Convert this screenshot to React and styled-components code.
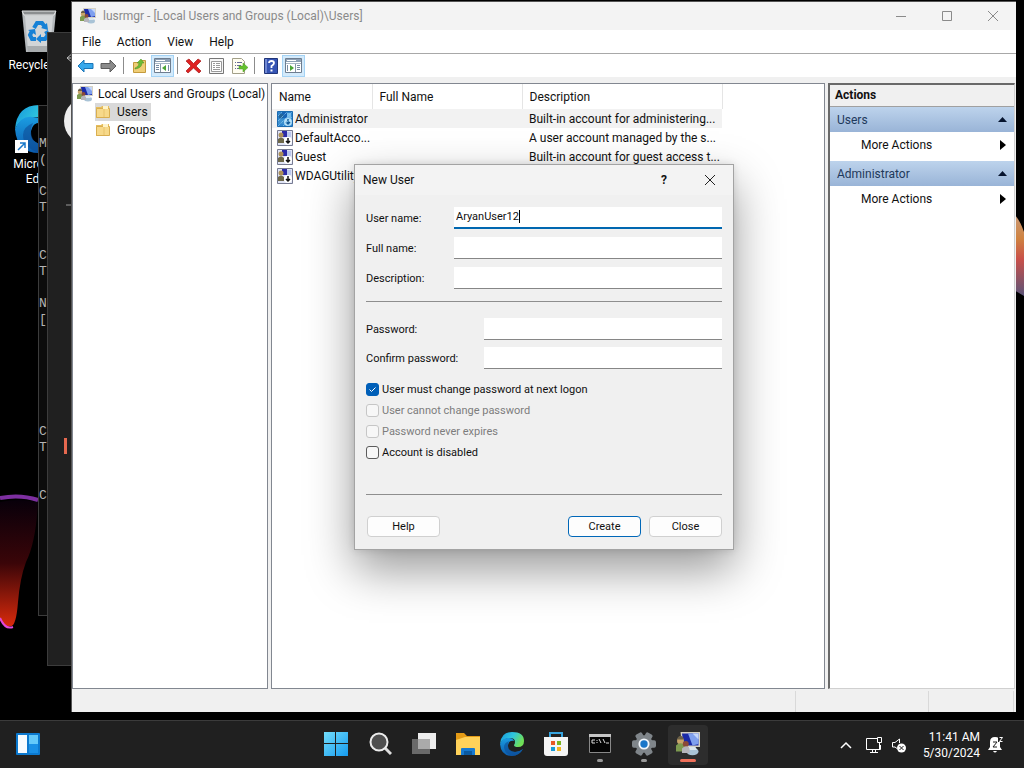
import React, { useState } from 'react';
import styled, { createGlobalStyle, css } from 'styled-components';

const GlobalStyle = createGlobalStyle`
  * {
    box-sizing: border-box;
  }
  body {
    margin: 0;
    background: #000;
    color: #111;
    font-family: Roboto, 'Noto Sans', sans-serif;
    font-size: 12px;
  }
  button,
  input {
    font: inherit;
    color: inherit;
  }
  svg {
    display: block;
    flex: none;
  }
`;

/* ---------- desktop ---------- */

const Desktop = styled.div`
  display: flex;
  flex-direction: column;
  height: 100vh;
  min-height: 600px;
  overflow: hidden;
`;

const Workspace = styled.main`
  position: relative;
  flex: 1;
  overflow: hidden;
`;

const Petal = styled.svg`
  position: absolute;
  top: ${(p) => p.$top}px;
  ${(p) => (p.$right ? 'right: 0;' : 'left: 0;')}
`;

const Shortcuts = styled.div`
  display: flex;
  flex-direction: column;
  gap: 32px;
  width: 78px;
  padding-top: 8px;
`;

const Shortcut = styled.a`
  display: flex;
  flex-direction: column;
  align-items: center;
  gap: 4px;
  color: #fff;
  line-height: 15px;
  text-align: center;
  text-decoration: none;
`;

const BackWindow = styled.div`
  position: absolute;
  top: ${(p) => p.$top}px;
  left: ${(p) => p.$left}px;
  width: 300px;
  height: ${(p) => p.$height}px;
  border: 1px solid #3c3c3c;
  background: ${(p) => p.$bg};
`;

const ConsoleText = styled.pre`
  margin: 30px 0 0;
  color: #b4b4b4;
  font-family: 'Liberation Mono', monospace;
  font-size: 13px;
  line-height: 16px;
`;

/* ---------- management console ---------- */

const ConsoleWindow = styled.section`
  position: absolute;
  top: 1px;
  right: 8px;
  bottom: 8px;
  left: 71px;
  display: flex;
  flex-direction: column;
  border: 1px solid #555;
  border-width: 1px 0 0 1px;
  background: #f0f0f0;
`;

const TitleBar = styled.header`
  display: flex;
  align-items: center;
  height: 28px;
  padding-left: 8px;
  background: #f3f3f3;
  color: #8a8a8a;
`;

const Title = styled.h1`
  flex: 1;
  margin: 0;
  font-size: 12px;
  font-weight: 400;

  svg + & {
    margin-left: 7px;
  }
`;

const CaptionButton = styled.button`
  display: flex;
  align-items: center;
  justify-content: center;
  width: 46px;
  height: 28px;
  padding: 0;
  border: 0;
  background: none;
  color: ${(p) => p.$color || '#8a8a8a'};
`;

const MenuBar = styled.nav`
  display: flex;
  height: 24px;
  padding-left: 2px;
  border-bottom: 1px solid #a8a8a8;
  background: #fff;
`;

const MenuItem = styled.button`
  padding: 0 8px;
  border: 0;
  background: none;
`;

const Toolbar = styled.div`
  display: flex;
  align-items: center;
  height: 23px;
  padding-left: 2px;
  background: #fff;
`;

const ToolButton = styled.button`
  display: flex;
  align-items: center;
  justify-content: center;
  width: 23px;
  height: 22px;
  padding: 0;
  border: 1px solid ${(p) => (p.$active ? '#a4d3f5' : 'transparent')};
  background: ${(p) => (p.$active ? '#d3eafb' : 'none')};
`;

const ToolSeparator = styled.span`
  width: 1px;
  height: 17px;
  margin: 0 4px 0 3px;
  background: #8c8c8c;
`;

const Panes = styled.div`
  display: flex;
  flex: 1;
  gap: 3px;
  min-height: 0;
  padding-top: 6px;
`;

const Pane = styled.div`
  border: 1px solid #828790;
  background: #fff;
`;

const TreePane = styled(Pane)`
  width: 196px;
  padding-top: 1px;
`;

const TreeRow = styled.div`
  display: flex;
  align-items: center;
  gap: 5px;
  height: 18px;
  padding-left: ${(p) => (p.$nested ? 22 : 4)}px;
  white-space: nowrap;
`;

const TreeLabel = styled.button`
  display: flex;
  align-items: center;
  gap: 6px;
  height: 18px;
  padding: 0 3px 0 0;
  border: 0;
  background: ${(p) => (p.$selected ? '#d9d9d9' : 'none')};
`;

const ListPane = styled(Pane)`
  flex: 1;
  min-width: 0;
`;

const UserTable = styled.table`
  width: 450px;
  table-layout: fixed;
  border-collapse: collapse;
  text-align: left;
  white-space: nowrap;

  th {
    height: 25px;
    padding: 0 7px;
    border-right: 1px solid #e5e5e5;
    font-weight: 400;
  }
  td {
    height: 19px;
    padding: 0 0 0 7px;
    line-height: 18px;
  }
`;

const Row = styled.tr`
  background: ${(p) => (p.$selected ? '#f2f2f2' : '#fff')};

  td:first-child {
    padding-left: 5px;
  }
`;

const NameCell = styled.span`
  display: flex;
  align-items: center;
  gap: 2px;
`;

const ActionsPane = styled.aside`
  width: 187px;
  margin-right: 1px;
  border: 1px solid #d0d0d0;
  border-top: 2px solid #696969;
  border-left: 2px solid #696969;
  background: #fff;
`;

const ActionsTitle = styled.h2`
  height: 22px;
  margin: 0;
  padding-left: 5px;
  border-bottom: 1px solid #a0a0a0;
  background: #f0f0f0;
  font-size: 12px;
  font-weight: 700;
  line-height: 21px;
`;

const ActionGroup = styled.div`
  margin-bottom: 4px;
`;

const GroupButton = styled.button`
  display: flex;
  align-items: center;
  justify-content: space-between;
  width: 100%;
  height: 25px;
  padding: 0 7px;
  border: 0;
  background: linear-gradient(#bdd3ec, #99b4d7);
  color: #1e395b;
`;

const ActionButton = styled(GroupButton)`
  padding: 0 8px 0 31px;
  background: none;
  color: #111;
`;

const StatusBar = styled.footer`
  display: flex;
  justify-content: flex-end;
  height: 23px;
  padding: 2px 2px 0 0;
`;

const StatusCell = styled.span`
  width: ${(p) => p.$width}px;
  border-left: 1px solid #d9d9d9;
`;

/* ---------- new user dialog ---------- */

const Dialog = styled.form`
  position: absolute;
  top: 164px;
  left: 354px;
  width: 380px;
  border: 1px solid #a3a3a3;
  background: #f0f0f0;
  box-shadow: 0 20px 44px rgba(0, 0, 0, 0.4), 0 0 8px rgba(0, 0, 0, 0.12);
  font-size: 11px;
`;

const DialogTitle = styled.header`
  display: flex;
  align-items: center;
  height: 30px;
  padding-left: 8px;
  background: #f3f3f3;
  font-size: 12px;
`;

const DialogBody = styled.div`
  display: flex;
  flex-direction: column;
  padding: 12px 11px;
`;

const Fields = styled.div`
  display: flex;
  flex-direction: column;
  gap: ${(p) => p.$gap}px;
`;

const FieldRow = styled.div`
  display: grid;
  grid-template-columns: ${(p) => p.$labelWidth}px 1fr;
  align-items: center;
`;

const InputBox = styled.span`
  display: flex;
  align-items: center;
  height: 22px;
  padding: 0 2px;
  border-bottom: 1px solid #868686;
  background: #fff;

  ${(p) =>
    p.$focused &&
    css`
      padding-bottom: 2px;
      border-bottom: 2px solid #0067b0;
    `}
`;

const TextInput = styled.input`
  min-width: 0;
  padding: 0;
  border: 0;
  outline: 0;
  background: none;
  ${(p) => (p.$hug ? 'field-sizing: content; caret-color: transparent;' : 'flex: 1;')}
`;

const Caret = styled.span`
  width: 1px;
  height: 13px;
  background: #000;
`;

const Divider = styled.hr`
  width: 100%;
  height: 1px;
  margin: ${(p) => p.$margin};
  border: 0;
  background: #8e8e8e;
`;

const CheckList = styled.div`
  padding-top: 10px;
`;

const CheckLabel = styled.label`
  display: flex;
  align-items: center;
  gap: 3px;
  height: 21px;
  color: ${(p) => (p.$disabled ? '#7d7d7d' : '#111')};
`;

const CheckBox = styled.input`
  appearance: none;
  width: 13px;
  height: 13px;
  margin: 0;
  border: 1px solid #5c5c5c;
  border-radius: 3px;
  background: #f7f7f7;

  &:disabled {
    border-color: #c6c6c6;
  }
  &:checked {
    border-color: #005fb8;
    background: #005fb8
      url("data:image/svg+xml,%3Csvg xmlns='http://www.w3.org/2000/svg' viewBox='0 0 11 11'%3E%3Cpath d='M2.5 5.5l2 2 4-4' fill='none' stroke='%23fff'/%3E%3C/svg%3E");
  }
`;

const ButtonRow = styled.div`
  display: flex;
  gap: 8px;
  padding-left: 1px;
`;

const PushButton = styled.button`
  width: 73px;
  height: 21px;
  padding: 0;
  border: 1px solid ${(p) => (p.$primary ? '#0067b8' : '#d0d0d0')};
  border-radius: 4px;
  background: #fdfdfd;

  &:first-child {
    margin-right: auto;
  }
`;

/* ---------- taskbar ---------- */

const Taskbar = styled.footer`
  display: grid;
  grid-template-columns: 1fr auto 1fr;
  height: 48px;
  border-top: 1px solid #3b3b3b;
  background: #202020;
  color: #fff;
`;

const TaskGroup = styled.div`
  display: flex;
  align-items: center;
  padding-left: ${(p) => p.$inset || 0}px;
`;

const TaskButton = styled.button`
  display: flex;
  flex-direction: column;
  align-items: center;
  gap: 3px;
  width: 40px;
  height: 40px;
  margin: 0 2px;
  padding: 7px 0 0;
  border: 0;
  border-radius: 4px;
  background: ${(p) => (p.$active ? '#2d2d2d' : 'none')};

  &::after {
    content: '';
    width: ${(p) => (p.$active ? 16 : 6)}px;
    height: 3px;
    border-radius: 2px;
    background: ${(p) => (p.$active ? '#f0705a' : p.$running ? '#9a9a9a' : 'transparent')};
  }
`;

const Tray = styled.div`
  display: flex;
  align-items: center;
  justify-content: flex-end;
  gap: 8px;
  padding-right: 20px;

  svg:first-child {
    margin-right: 5px;
  }
`;

const Clock = styled.time`
  margin-left: 8px;
  line-height: 16px;
  text-align: right;
`;

/* ---------- icons ---------- */

const UsersIcon = ({ size = 16 }) => (
  <svg width={size} height={size} viewBox="0 0 16 16">
    <path d="M3 0h13v10H4z" fill="#d5d2c4" />
    <path d="M4 1h11v8H5z" fill="#1a2aa8" />
    <path d="M8 1h7v7l-4 1z" fill="#7fa0ee" />
    <path d="M11 1h4v4z" fill="#c3d6fb" />
    <ellipse cx="11" cy="13" rx="4" ry="2.5" fill="#a9c3d6" />
    <path d="M8 10h5l1 2H9z" fill="#dce7ee" />
    <circle cx="3" cy="6" r="2.3" fill="#c8a46a" />
    <path d="M0 13V9q3-3 6 0v4H1z" fill="#7d9a50" />
    <circle cx="6.500" cy="8" r="2" fill="#8b4937" />
    <path d="M4 14v-3q3-3 5 0v3z" fill="#b5b4bb" />
    <path d="M1 4q2-3 4 0v1H1z" fill="#6b6048" />
  </svg>
);

const FolderIcon = () => (
  <svg width="16" height="16" viewBox="0 0 16 16">
    <path d="M1 3h5l1-1h7v12H1z" fill="#e6bd5c" />
    <path d="M1.500 4.500h13v9h-13z" fill="#f7d98a" stroke="#d9ae50" />
    <path d="M8 2h5v3H8z" fill="#fff3c8" />
    <path d="M9 5v8" stroke="#e8c36c" />
  </svg>
);

const UserIcon = ({ selected }) => (
  <svg width="16" height="16" viewBox="0 0 16 16">
    <path d="M.5.5h15v15H.5z" fill={selected ? '#2f86cf' : '#dfe3f5'} stroke={selected ? '#1b6bb0' : '#777b92'} />
    <path d="M5 1h5v6H5z" fill={selected ? '#1763b5' : '#2c2ba7'} />
    <path d="M10 2h4v5h-4z" fill={selected ? '#75bae9' : '#bac8ef'} />
    <circle cx="4" cy="5" r="2.5" fill={selected ? '#24649a' : '#ac9058'} />
    <path d="M1 13V9q3-3 6 0v4z" fill={selected ? '#3e91cf' : '#6d6849'} />
    <circle cx="11" cy="11" r="4" fill={selected ? '#b5e0f8' : '#fff'} />
    <path d="M11 8v5M9 11l2 2 2-2" fill="none" stroke={selected ? '#125b9b' : '#111'} strokeWidth="1.500" />
    {selected && <path d="M1 5l4-4M1 10l9-9M1 15L15 1M6 15l9-9M11 15l4-4" stroke="#8accf5" strokeDasharray="1 1" />}
  </svg>
);

const ArrowIcon = ({ forward }) => (
  <svg width="17" height="16" viewBox="0 0 17 16">
    <path
      d={forward ? 'M16 8L10 2v3.500H1v5h9V14z' : 'M1 8l6-6v3.500h9v5H7V14z'}
      fill={forward ? '#8b8b8b' : '#37a8ec'}
      stroke={forward ? '#5b5b5b' : '#1b75b7'}
    />
  </svg>
);

const UpFolderIcon = () => (
  <svg width="16" height="16" viewBox="0 0 16 16">
    <path d="M1.500 4.500h6l1-2h5v12h-12z" fill="#efcd76" stroke="#c49a3c" />
    <path d="M3 10q4-1 4-5H5l4-4 3 4h-2q0 5-7 6z" fill="#6cbb35" stroke="#4b8e22" strokeWidth=".5" />
  </svg>
);

const PanelIcon = ({ flip }) => (
  <svg width="17" height="15" viewBox="0 0 17 15">
    <path d="M.5.5h16v14H.5z" fill="#fff" stroke="#6e7d8f" />
    <path d="M1 1h15v3H1z" fill="#8da0b5" />
    <path d="M2 2.500h9" stroke="#fff" />
    <path d="M1 5.500h15" stroke="#a9b7c6" />
    <g transform={flip ? 'translate(17 0) scale(-1 1)' : undefined}>
      <path d="M6.500 6v8" stroke="#8796a7" />
      <path d="M2 7.500h3M2 9.500h3M2 11.500h3M14.500 7v6" stroke="#768ba3" />
      <path d="M12 7v6L8 10z" fill="#4ca536" />
    </g>
  </svg>
);

const DeleteIcon = () => (
  <svg width="17" height="16" viewBox="0 0 17 16">
    <path d="M1 3l3-2 4.500 4.500L13 1l3 2-5 5 5 5-2 2-5.500-5L3 15l-2-2 5-5z" fill="#df2222" stroke="#a61919" strokeWidth=".7" />
  </svg>
);

const PropertiesIcon = () => (
  <svg width="15" height="16" viewBox="0 0 15 16">
    <path d="M.5.5h14v15H.5z" fill="#f6f6f6" stroke="#777" />
    <path d="M2.500 3.500h10v10h-10z" fill="#fff" stroke="#999" />
    <path d="M4 5.500h2M7 5.500h4M4 7.500h2M7 7.500h4M4 9.500h2M7 9.500h4M4 11.500h7" stroke="#999" />
  </svg>
);

const ExportIcon = () => (
  <svg width="16" height="16" viewBox="0 0 16 16">
    <path d="M.5.5h9l3 3v12H.5z" fill="#fffdf0" stroke="#a29f88" />
    <path d="M3 4.500h1M5 4.500h5M3 7.500h1M5 7.500h4M3 10.500h1M5 10.500h3" stroke="#666a98" />
    <path d="M7 8h4V5l5 4.500-5 4.500v-3H7z" fill="#64c12e" stroke="#4b9d23" strokeWidth=".5" />
  </svg>
);

const HelpIcon = () => (
  <svg width="14" height="16" viewBox="0 0 14 16">
    <path d="M.5.5h13v15H.5z" fill="#3554b4" stroke="#203579" />
    <path d="M1 1h2v14H1z" fill="#7189d3" />
    <path d="M5 5q0-2 2.500-2T10 5q0 1.500-2.500 3v2" fill="none" stroke="#fff" strokeWidth="1.800" />
    <path d="M6.500 11.500h2v2h-2z" fill="#fff" />
  </svg>
);

const RecycleIcon = () => (
  <svg width="38" height="46" viewBox="0 0 38 46">
    <path d="M2 4l4 40h26l4-40z" fill="#b4b8bb" />
    <path d="M2 3h34l-2 4H4z" fill="#8b8e90" stroke="#e5e7e8" />
    <path d="M5 8h28l-3 34H8z" fill="#d2d5d7" />
    <path d="M7 38h24l-1 6H8z" fill="#a8acae" />
    <g fill="none" stroke="#1681d6" strokeWidth="4">
      <path d="M14 20l3-5h5l3 4" />
      <path d="M26 23l2 4-3 4h-5" />
      <path d="M16 31h-4l-2-4 2-4" />
    </g>
    <path d="M27 15l1 7-7-2zM21 26v9l-5-4zM8 22l7-1 1 6z" fill="#1681d6" />
  </svg>
);

const EdgeIcon = ({ size, id }) => (
  <svg width={size} height={size} viewBox="0 0 24 24">
    <defs>
      <linearGradient id={`${id}-top`} x1="0" y1="0" x2="1" y2=".4">
        <stop offset="0" stopColor="#1595dc" />
        <stop offset=".55" stopColor="#2fc6de" />
        <stop offset="1" stopColor="#70df57" />
      </linearGradient>
      <linearGradient id={`${id}-side`} x1="0" y1="0" x2="0" y2="1">
        <stop offset="0" stopColor="#1b9de2" />
        <stop offset="1" stopColor="#0b5bad" />
      </linearGradient>
    </defs>
    <path d="M0 12Q1 0 12 0q12 0 12 9 0 6-6 6-4 0-4-2 1-1 1-3 0-4-5-4-7 0-10 6z" fill={`url(#${id}-top)`} />
    <path d="M0 12Q3 5 9 6q4 0 5 3-5-1-6 4-1 6 7 7 4 0 8-3-4 7-11 7Q1 24 0 12z" fill={`url(#${id}-side)`} />
    <path d="M8 13q0 7 8 7 4 0 7-3-4 7-11 7-8-3-8-9 0-4 5-6-1 2-1 4z" fill="#0d4c96" opacity=".6" />
  </svg>
);

const ShortcutEdge = () => (
  <svg width="48" height="48" viewBox="0 0 48 48">
    <EdgeIcon size={48} id="shortcut-edge" />
    <path d="M0 35h13v13H0z" fill="#fff" />
    <path d="M3 45l7-7M5 38h5v5" fill="none" stroke="#1878c9" strokeWidth="1.500" />
  </svg>
);

const WidgetsIcon = () => (
  <svg width="24" height="24" viewBox="0 0 24 24">
    <rect y="1" width="24" height="22" rx="1" fill="#0b79cf" />
    <path d="M2 3h9v18H2z" fill="#f5fbff" />
    <path d="M13 3h9v9h-9z" fill="#64c9fa" />
    <path d="M13 12h9v9h-9z" fill="#198fe5" />
  </svg>
);

const StartIcon = () => (
  <svg width="24" height="24" viewBox="0 0 24 24">
    <defs>
      <linearGradient id="start" x1="0" y1="0" x2="1" y2="1">
        <stop offset="0" stopColor="#72ddfb" />
        <stop offset="1" stopColor="#159bf0" />
      </linearGradient>
    </defs>
    <path d="M0 0h11v11H0zM12 0h12v11H12zM0 12h11v12H0zM12 12h12v12H12z" fill="url(#start)" />
  </svg>
);

const SearchIcon = () => (
  <svg width="24" height="24" viewBox="0 0 24 24">
    <path d="M17 16l6 6" stroke="#dedede" strokeWidth="3" />
    <circle cx="11" cy="10" r="8.500" fill="#505050" stroke="#ececec" strokeWidth="2" />
  </svg>
);

const TaskViewIcon = () => (
  <svg width="24" height="24" viewBox="0 0 24 24">
    <path d="M6 1h18v16H6z" fill="#ededed" />
    <path d="M0 7h18v15H0z" fill="#696969" />
    <path d="M6 7h12v10H6z" fill="#aaa" />
  </svg>
);

const ExplorerIcon = () => (
  <svg width="26" height="24" viewBox="0 0 26 24">
    <path d="M1 1h8l3 3h13v18H1z" fill="#e49b16" />
    <path d="M1 8l9-3h15v18H1z" fill="#ffd25a" />
    <path d="M6 23v-6q0-1 1-1h12q1 0 1 1v6z" fill="#1679d0" />
    <path d="M9 19h8v4H9z" fill="#0b599f" />
  </svg>
);

const StoreIcon = () => (
  <svg width="24" height="24" viewBox="0 0 24 24">
    <path d="M6 6V1h12v5" fill="none" stroke="#36a4df" strokeWidth="2" />
    <path d="M0 5h24v16q0 3-3 3H3q-3 0-3-3z" fill="#f5f5f5" />
    <path d="M7 9h4v4H7z" fill="#e85824" />
    <path d="M13 9h4v4h-4z" fill="#79b421" />
    <path d="M7 15h4v4H7z" fill="#169bd7" />
    <path d="M13 15h4v4h-4z" fill="#f4b51f" />
  </svg>
);

const TerminalIcon = () => (
  <svg width="24" height="24" viewBox="0 0 24 24">
    <path d="M1.500 2.500h21v18h-21z" fill="#050505" stroke="#888" />
    <path d="M1 2h22v3H1z" fill="#c6c6c6" />
    <path d="M7 8H4v3h3M9 8v1M9 10v1M11 7l2 4M15 7l2 4M18 11h3" fill="none" stroke="#ddd" />
  </svg>
);

const SettingsIcon = () => (
  <svg width="24" height="24" viewBox="0 0 26 26">
    <g fill="#7f858a">
      <circle cx="13" cy="13" r="9.500" />
      {[30, 90, 150].map((angle) => (
        <rect key={angle} x="9" y="0" width="8" height="26" rx="2" transform={`rotate(${angle} 13 13)`} />
      ))}
    </g>
    <circle cx="13" cy="13" r="6" fill="#f0f5fa" />
    <circle cx="13" cy="13" r="4" fill="#1976c9" />
  </svg>
);

const NetworkIcon = () => (
  <svg width="18" height="18" viewBox="0 0 18 18" fill="none" stroke="#fff">
    <path d="M12 2.500H1.500v11h14V9M5 16.500h8M7.500 14v2M10.500 14v2" />
    <path d="M12.500 1.500h4v5h-4zM14.500 7v7" />
  </svg>
);

const VolumeIcon = () => (
  <svg width="16" height="16" viewBox="0 0 16 16" fill="none" stroke="#fff">
    <path d="M6 11.500L4 10H1.500V5.500H4L8.500 2v4" />
    <circle cx="10.500" cy="11" r="4.500" fill="#fff" stroke="none" />
    <path d="M8.500 9l4 4M12.500 9l-4 4" stroke="#202020" />
  </svg>
);

const BellIcon = () => (
  <svg width="16" height="17" viewBox="0 0 16 17">
    <path d="M2 6q0-5 5-5t5 5v5l2 3H0l2-3zM5 15h4q-2 3-4 0z" fill="#fff" />
    <path d="M5 6h4l-4 5h4" fill="none" stroke="#202020" />
    <path d="M10 0h6v6h-6z" fill="#202020" />
    <path d="M11.500 1.500h3l-3 4h3" fill="none" stroke="#fff" />
  </svg>
);

const CloseIcon = () => (
  <svg width="12" height="12" viewBox="0 0 12 12" stroke="currentColor">
    <path d="M1 1l10 10M11 1L1 11" />
  </svg>
);

/* ---------- data ---------- */

const consoleLines = ['M', '(', '', 'C', 'T', '', '', 'C', 'T', '', 'N', '[', '', '', '', '', '', '', 'C', 'T', '', '', 'C'];

const users = [
  ['Administrator', 'Built-in account for administering...'],
  ['DefaultAcco...', 'A user account managed by the s...'],
  ['Guest', 'Built-in account for guest access t...'],
  ['WDAGUtility...', 'A user account managed and use...'],
];

const tasks = [
  { name: 'Start', icon: <StartIcon /> },
  { name: 'Search', icon: <SearchIcon /> },
  { name: 'Task View', icon: <TaskViewIcon /> },
  { name: 'File Explorer', icon: <ExplorerIcon /> },
  { name: 'Microsoft Edge', icon: <EdgeIcon size={24} id="task-edge" /> },
  { name: 'Microsoft Store', icon: <StoreIcon /> },
  { name: 'Command Prompt', icon: <TerminalIcon />, running: true },
  { name: 'Settings', icon: <SettingsIcon />, running: true },
  { name: 'lusrmgr', icon: <UsersIcon size={24} />, active: true },
];

const options = [
  { label: 'User must change password at next logon', checked: true },
  { label: 'User cannot change password', disabled: true },
  { label: 'Password never expires', disabled: true },
  { label: 'Account is disabled' },
];

function Field({ id, label, labelWidth, type = 'text' }) {
  return (
    <FieldRow $labelWidth={labelWidth}>
      <label htmlFor={id}>{label}</label>
      <InputBox>
        <TextInput id={id} type={type} />
      </InputBox>
    </FieldRow>
  );
}

function NewUserDialog() {
  const [userName, setUserName] = useState('AryanUser12');

  return (
    <Dialog onSubmit={(e) => e.preventDefault()}>
      <DialogTitle>
        <Title>New User</Title>
        <CaptionButton type="button" aria-label="What's this" $color="#111">
          <b>?</b>
        </CaptionButton>
        <CaptionButton type="button" aria-label="Close dialog" $color="#222">
          <CloseIcon />
        </CaptionButton>
      </DialogTitle>
      <DialogBody>
        <Fields $gap={8}>
          <FieldRow $labelWidth={88}>
            <label htmlFor="user-name">User name:</label>
            <InputBox $focused>
              <TextInput id="user-name" $hug value={userName} onChange={(e) => setUserName(e.target.value)} />
              <Caret />
            </InputBox>
          </FieldRow>
          <Field id="full-name" label="Full name:" labelWidth={88} />
          <Field id="description" label="Description:" labelWidth={88} />
        </Fields>
        <Divider $margin="12px 0 16px" />
        <Fields $gap={7}>
          <Field id="password" label="Password:" labelWidth={118} type="password" />
          <Field id="confirm" label="Confirm password:" labelWidth={118} type="password" />
        </Fields>
        <CheckList>
          {options.map(({ label, checked, disabled }) => (
            <CheckLabel key={label} $disabled={disabled}>
              <CheckBox type="checkbox" defaultChecked={checked} disabled={disabled} />
              {label}
            </CheckLabel>
          ))}
        </CheckList>
        <Divider $margin="31px 0 21px" />
        <ButtonRow>
          <PushButton type="button">Help</PushButton>
          <PushButton type="submit" $primary>Create</PushButton>
          <PushButton type="button">Close</PushButton>
        </ButtonRow>
      </DialogBody>
    </Dialog>
  );
}

function Actions() {
  return (
    <ActionsPane>
      <ActionsTitle>Actions</ActionsTitle>
      {['Users', 'Administrator'].map((name) => (
        <ActionGroup key={name}>
          <GroupButton>
            {name}
            <svg width="9" height="5" viewBox="0 0 9 5"><path d="M0 5l4.500-5L9 5z" fill="#06142e" /></svg>
          </GroupButton>
          <ActionButton>
            More Actions
            <svg width="6" height="10" viewBox="0 0 6 10"><path d="M0 0l6 5-6 5z" fill="#000" /></svg>
          </ActionButton>
        </ActionGroup>
      ))}
    </ActionsPane>
  );
}

function Lusrmgr() {
  return (
    <ConsoleWindow>
      <TitleBar>
        <UsersIcon />
        <Title>lusrmgr - [Local Users and Groups (Local)\Users]</Title>
        <CaptionButton aria-label="Minimize">
          <svg width="10" height="10"><path d="M0 5.500h10" stroke="currentColor" /></svg>
        </CaptionButton>
        <CaptionButton aria-label="Maximize">
          <svg width="10" height="10"><path d="M.5.5h9v9h-9z" fill="none" stroke="currentColor" /></svg>
        </CaptionButton>
        <CaptionButton aria-label="Close"><CloseIcon /></CaptionButton>
      </TitleBar>
      <MenuBar>
        {['File', 'Action', 'View', 'Help'].map((item) => (
          <MenuItem key={item}>{item}</MenuItem>
        ))}
      </MenuBar>
      <Toolbar>
        <ToolButton aria-label="Back"><ArrowIcon /></ToolButton>
        <ToolButton aria-label="Forward"><ArrowIcon forward /></ToolButton>
        <ToolSeparator />
        <ToolButton aria-label="Up one level"><UpFolderIcon /></ToolButton>
        <ToolButton aria-label="Console tree" $active><PanelIcon /></ToolButton>
        <ToolSeparator />
        <ToolButton aria-label="Delete"><DeleteIcon /></ToolButton>
        <ToolButton aria-label="Properties"><PropertiesIcon /></ToolButton>
        <ToolButton aria-label="Export list"><ExportIcon /></ToolButton>
        <ToolSeparator />
        <ToolButton aria-label="Help"><HelpIcon /></ToolButton>
        <ToolButton aria-label="Action pane" $active><PanelIcon flip /></ToolButton>
      </Toolbar>
      <Panes>
        <TreePane>
          <TreeRow><UsersIcon />Local Users and Groups (Local)</TreeRow>
          <TreeRow $nested><TreeLabel $selected><FolderIcon />Users</TreeLabel></TreeRow>
          <TreeRow $nested><TreeLabel><FolderIcon />Groups</TreeLabel></TreeRow>
        </TreePane>
        <ListPane>
          <UserTable>
            <colgroup>
              <col width="100" />
              <col width="150" />
              <col width="200" />
            </colgroup>
            <thead>
              <tr>
                <th>Name</th>
                <th>Full Name</th>
                <th>Description</th>
              </tr>
            </thead>
            <tbody>
              {users.map(([name, description], i) => (
                <Row key={name} $selected={i === 0}>
                  <td><NameCell><UserIcon selected={i === 0} />{name}</NameCell></td>
                  <td />
                  <td>{description}</td>
                </Row>
              ))}
            </tbody>
          </UserTable>
        </ListPane>
        <Actions />
      </Panes>
      <StatusBar>
        <StatusCell $width={133} />
        <StatusCell $width={85} />
        <StatusCell $width={1} />
      </StatusBar>
    </ConsoleWindow>
  );
}

function App() {
  return (
    <Desktop>
      <GlobalStyle />
      <Workspace>
        <Petal $top={480} width="60" height="160" viewBox="0 0 60 160">
          <defs>
            <linearGradient id="petal" x1="0" y1="0" x2="0" y2="1">
              <stop offset="0" stopColor="#08000a" />
              <stop offset=".5" stopColor="#3a0508" />
              <stop offset="1" stopColor="#d92a0c" />
            </linearGradient>
          </defs>
          <path d="M0 22q18-4 38 0-2 40-12 60-6 16-8 40-2 26-8 24Q4 148 0 138z" fill="url(#petal)" />
          <path d="M0 18q20-4 38 2" fill="none" stroke="#7d2fa0" strokeWidth="4" />
          <path d="M0 138q5 12 13 9" fill="none" stroke="#e048d8" strokeWidth="2" />
        </Petal>
        <Petal $top={214} $right width="10" height="90" viewBox="0 0 10 90">
          <defs>
            <linearGradient id="petal-right" x1="0" y1="0" x2="0" y2="1">
              <stop offset="0" stopColor="#c99a78" />
              <stop offset=".3" stopColor="#cf8240" />
              <stop offset=".55" stopColor="#c9504a" />
              <stop offset="1" stopColor="#5a5478" />
            </linearGradient>
          </defs>
          <path d="M0 0q6 6 10 18v64l-10-6z" fill="url(#petal-right)" />
        </Petal>
        <Shortcuts>
          <Shortcut href="#recycle-bin"><RecycleIcon />Recycle Bin</Shortcut>
          <Shortcut href="#edge"><ShortcutEdge />Microsoft Edge</Shortcut>
        </Shortcuts>
        <BackWindow $top={105} $left={38} $height={511} $bg="#0c0c0c">
          <ConsoleText>{consoleLines.join('\n')}</ConsoleText>
        </BackWindow>
        <BackWindow $top={32} $left={47} $height={634} $bg="#202020">
          <svg width="60" height="500" viewBox="0 0 60 500">
            <path d="M25 20l-6 5 6 5M19 25h6" fill="none" stroke="#bbb" />
            <circle cx="40" cy="88" r="24" fill="#eee" />
            <path d="M18 172h6" stroke="#999" />
            <path d="M16 405h3v16h-3z" fill="#e5684f" />
          </svg>
        </BackWindow>
        <Lusrmgr />
        <NewUserDialog />
      </Workspace>
      <Taskbar>
        <TaskGroup $inset={6}>
          <TaskButton aria-label="Widgets"><WidgetsIcon /></TaskButton>
        </TaskGroup>
        <TaskGroup>
          {tasks.map((task) => (
            <TaskButton key={task.name} aria-label={task.name} $running={task.running} $active={task.active}>
              {task.icon}
            </TaskButton>
          ))}
        </TaskGroup>
        <Tray>
          <svg width="12" height="8" viewBox="0 0 12 8"><path d="M1 7l5-5 5 5" fill="none" stroke="#fff" strokeWidth="1.500" /></svg>
          <NetworkIcon />
          <VolumeIcon />
          <Clock>11:41 AM<br />5/30/2024</Clock>
          <BellIcon />
        </Tray>
      </Taskbar>
    </Desktop>
  );
}

export default App;
